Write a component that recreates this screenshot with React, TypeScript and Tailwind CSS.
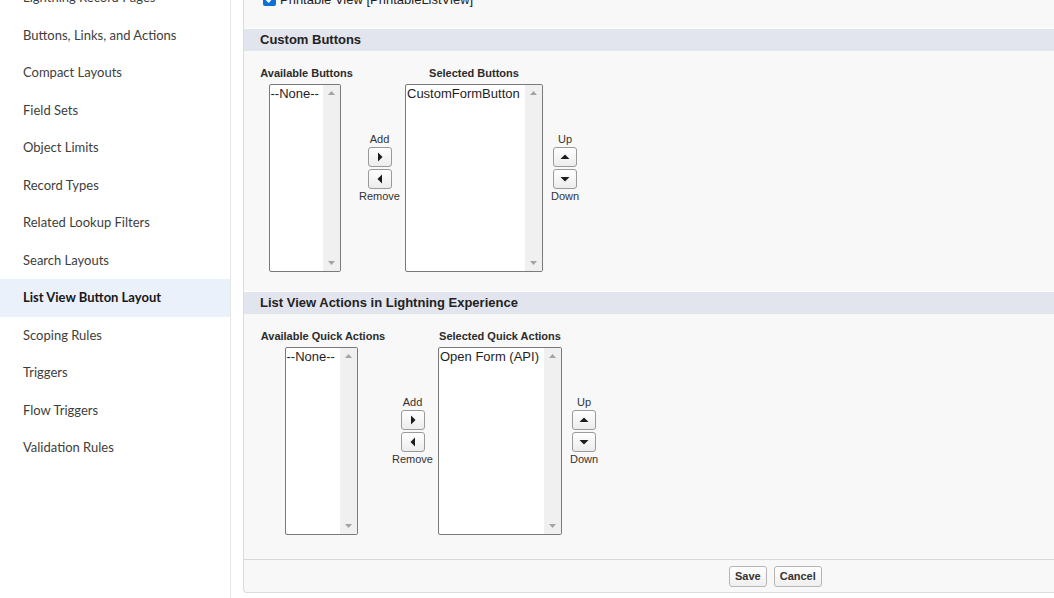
import React from 'react';

const navItems = [
  'Lightning Record Pages',
  'Buttons, Links, and Actions',
  'Compact Layouts',
  'Field Sets',
  'Object Limits',
  'Record Types',
  'Related Lookup Filters',
  'Search Layouts',
  'List View Button Layout',
  'Scoping Rules',
  'Triggers',
  'Flow Triggers',
  'Validation Rules',
];

const ACTIVE = 'List View Button Layout';

function Listbox({ width, item, shift = '' }: { width: string; item: string; shift?: string }) {
  return (
    <div className={`mt-[4px] h-[188px] ${width} ${shift} flex border border-[#7a7a7a] rounded-[2px] bg-white overflow-hidden`}>
      <div className="flex-1 pl-[1px] pt-[1px] text-[13px] leading-[15px] text-[#1e1e1e] whitespace-nowrap overflow-hidden">
        {item}
      </div>
      <div className="w-[17px] bg-[#f0f0f0] flex flex-col items-center justify-between pt-[6px] pb-[6px]">
        <svg width="7" height="4" viewBox="0 0 7 4">
          <path d="M0 4 L3.5 0 L7 4 Z" fill="#a3a3a3" />
        </svg>
        <svg width="7" height="4" viewBox="0 0 7 4">
          <path d="M0 0 L3.5 4 L7 0 Z" fill="#a3a3a3" />
        </svg>
      </div>
    </div>
  );
}

function ArrowButton({ dir }: { dir: 'left' | 'right' | 'up' | 'down' }) {
  const paths = {
    right: 'M3 0.5 L7.5 5 L3 9.5 Z',
    left: 'M7 0.5 L2.5 5 L7 9.5 Z',
    up: 'M0.5 7 L5 2.5 L9.5 7 Z',
    down: 'M0.5 3 L5 7.5 L9.5 3 Z',
  };
  return (
    <div className="w-[24px] h-[20px] flex items-center justify-center rounded-[3px] border border-[#9a9a9a] bg-gradient-to-b from-white to-[#ececec]">
      <svg width="10" height="10" viewBox="0 0 10 10">
        <path d={paths[dir]} fill="#1c1c1c" />
      </svg>
    </div>
  );
}

function MoveControls({ top, bottom, first, second }: { top: string; bottom: string; first: 'right' | 'up'; second: 'left' | 'down' }) {
  return (
    <div className="flex flex-col items-center text-[11px] leading-[13px] text-[#333]">
      <span>{top}</span>
      <div className="mt-[1px]">
        <ArrowButton dir={first} />
      </div>
      <div className="mt-[2px]">
        <ArrowButton dir={second} />
      </div>
      <span className="mt-[1px]">{bottom}</span>
    </div>
  );
}

function Duel({
  availLabel,
  selLabel,
  availW,
  availBoxW,
  selW,
  selItem,
}: {
  availLabel: string;
  selLabel: string;
  availW: string;
  availBoxW: string;
  selW: string;
  selItem: string;
}) {
  return (
    <div className="flex items-center">
      <div className={`${availW} flex flex-col items-center`}>
        <span className="text-[11px] leading-[13px] font-bold text-[#2b2b2b] whitespace-nowrap">{availLabel}</span>
        <Listbox width={availBoxW} item="--None--" shift="mr-[4px]" />
      </div>
      <div className="w-[51px] flex justify-center mb-[3px]">
        <MoveControls top="Add" bottom="Remove" first="right" second="left" />
      </div>
      <div className={`${selW} flex flex-col items-center`}>
        <span className="text-[11px] leading-[13px] font-bold text-[#2b2b2b] whitespace-nowrap">{selLabel}</span>
        <Listbox width={selW} item={selItem} />
      </div>
      <div className="ml-[10px] w-[24px] flex justify-center mb-[3px]">
        <MoveControls top="Up" bottom="Down" first="up" second="down" />
      </div>
    </div>
  );
}

function SubHeader({ title }: { title: string }) {
  return (
    <div className="border-t border-white">
      <div className="h-[22px] bg-[#e2e5ee] pl-[16px] text-[13px] leading-[22px] font-bold text-[#222]">
        {title}
      </div>
    </div>
  );
}

export default function App() {
  return (
    <div
      className="w-[1054px] h-[598px] overflow-hidden flex bg-white"
      style={{ fontFamily: '"Liberation Sans", Arial, sans-serif' }}
    >
      {/* SIDEBAR */}
      <aside className="w-[231px] shrink-0 border-r border-[#e5e5e5] h-full">
        <ul className="mt-[-20.75px]" style={{ fontFamily: 'Lato, "Noto Sans", sans-serif' }}>
          {navItems.map((item) => (
            <li
              key={item}
              className={`h-[37.5px] flex items-center pl-[23px] text-[13px] ${
                item === ACTIVE ? 'bg-[#eaf1fb] font-bold text-[#181818]' : 'text-[#3e3e3c]'
              }`}
            >
              {item}
            </li>
          ))}
        </ul>
      </aside>

      {/* MAIN */}
      <main className="flex-1 pl-[12px] pb-[5px] overflow-hidden">
        <div className="w-[1058px] mt-[-12px] bg-[#f8f8f8] border-l border-b border-[#dddbda] rounded-bl-[4px] flex flex-col">
          {/* checkbox row */}
          <div className="pt-[5px] pb-[22px] pl-[19px] flex items-center gap-[4px] h-[40px]">
            <div className="w-[13px] h-[13px] rounded-[2px] bg-[#0b6fd8] flex items-center justify-center self-start">
              <svg width="9" height="9" viewBox="0 0 9 9">
                <path d="M1.5 4.5 L3.7 6.7 L7.5 2.3" stroke="white" strokeWidth="1.8" fill="none" />
              </svg>
            </div>
            <span className="text-[13px] leading-[13px] text-[#222] self-start">Printable View [PrintableListView]</span>
          </div>

          <SubHeader title="Custom Buttons" />
          <div className="pl-[15px] pt-[16px] pb-[19px]">
            <Duel
              availLabel="Available Buttons"
              selLabel="Selected Buttons"
              availW="w-[95px]"
              availBoxW="w-[72px]"
              selW="w-[138px]"
              selItem="CustomFormButton"
            />
          </div>

          <SubHeader title="List View Actions in Lightning Experience" />
          <div className="pl-[15px] pt-[16px] pb-[24px]">
            <Duel
              availLabel="Available Quick Actions"
              selLabel="Selected Quick Actions"
              availW="w-[128px]"
              availBoxW="w-[73px]"
              selW="w-[124px]"
              selItem="Open Form (API)"
            />
          </div>

          {/* FOOTER */}
          <div className="border-t border-[#d8d8d8] pt-[6px] pb-[5px] pl-[485px] flex gap-[7px]">
            {['Save', 'Cancel'].map((label) => (
              <button
                key={label}
                className="h-[21px] px-[5px] rounded-[3px] border border-[#b5b5b5] bg-gradient-to-b from-white to-[#efefef] text-[11px] font-bold text-[#333]"
              >
                {label}
              </button>
            ))}
          </div>
        </div>
      </main>
    </div>
  );
}
